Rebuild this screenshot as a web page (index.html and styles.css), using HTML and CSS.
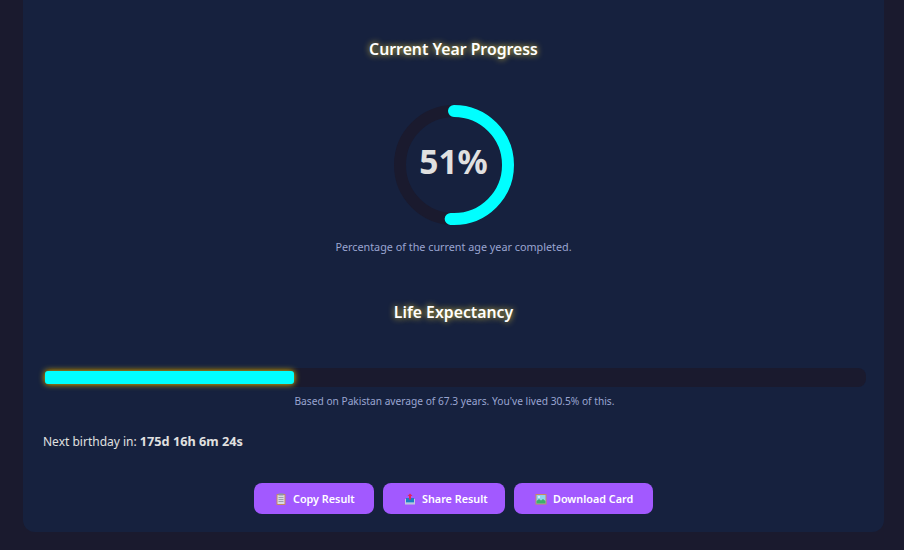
FILE: index.html
```html
<!DOCTYPE html>
<html lang="en">
<head>
<meta charset="utf-8">
<title>Age Result</title>
<link rel="stylesheet" href="styles.css">
</head>
<body>
<main class="card">
  <section class="ring-section">
    <h2 class="title">Current Year Progress</h2>
    <div class="ring">
      <svg class="ring-svg" width="120" height="120" viewBox="0 0 120 120">
        <circle class="ring-track" cx="60" cy="60" r="54"/>
        <circle class="ring-value" cx="60" cy="60" r="54" pathLength="100" stroke-dasharray="51 100" transform="rotate(-90 60 60)"/>
      </svg>
      <span class="ring-label">51%</span>
    </div>
    <p class="note">Percentage of the current age year completed.</p>
  </section>
  <section class="life-section">
    <h2 class="title title-life">Life Expectancy</h2>
    <div class="bar"><div class="bar-fill" style="width:30.4%"></div></div>
    <p class="note note-bar">Based on Pakistan average of 67.3 years. You've lived 30.5% of this.</p>
  </section>
  <p class="birthday">Next birthday in: <strong>175d 16h 6m 24s</strong></p>
  <div class="actions">
    <button class="btn" type="button">
      <svg class="ico" viewBox="0 0 12 12"><rect x="1.500" y="1" width="9" height="11" rx=".8" fill="#c98a5e"/><rect x="2.500" y="2" width="7" height="9" fill="#d9d9e3"/><rect x="3.500" y=".3" width="5" height="2.200" fill="#8f93a3"/><path d="M3.500 4.500h5M3.500 6.500h5M3.500 8.500h5" stroke="#8d8fa0" stroke-width=".8"/></svg>
      Copy Result
    </button>
    <button class="btn" type="button">
      <svg class="ico" viewBox="0 0 12 12"><path d="M1 6h10v5.500H1z" fill="#c4cbdc"/><path d="M2 5h8v4H2z" fill="#1c7fc4"/><path d="M2 9h8v1.200H2z" fill="#7fb0dc"/><path d="M6 .5 8.500 3H7v3.500H5V3H3.500z" fill="#e0245e"/></svg>
      Share Result
    </button>
    <button class="btn" type="button">
      <svg class="ico" viewBox="0 0 12 12"><rect x=".5" y="1" width="11" height="10.500" fill="#c98a5e"/><rect x="1.500" y="2" width="9" height="8.500" fill="#8fd3ef"/><path d="M1.500 10.500V8l2.500-2 2 1.500L8 6l2.500 2v2.500z" fill="#3fae6a"/><circle cx="4" cy="4" r="1" fill="#e8f6fb"/></svg>
      Download Card
    </button>
  </div>
</main>
</body>
</html>
```
FILE: styles.css
```css
* { box-sizing: border-box; }
html, body { margin: 0; height: 100%; }
body {
  background: #1a1a2e;
  color: #e0e0e0;
  font-family: "Noto Sans", "Open Sans", sans-serif;
  overflow: hidden;
  padding: 0 20px 18px 23px;
  height: 550px;
}
.card {
  background: #16213e;
  border-radius: 0 0 12px 12px;
  height: 532px;
  padding: 0 18px 0 20px;
  display: flex;
  flex-direction: column;
}
.title {
  margin: 0;
  color: #fff;
  font-size: 15.800px;
  font-weight: 600;
  line-height: 22px;
  text-align: center;
  text-shadow: 0 0 6px rgba(255, 225, 60, .9);
}
.title-life { padding-right: 2px; }
.ring-section { padding: 38px 2px 0 0; display: flex; flex-direction: column; align-items: center; }
.ring { position: relative; width: 120px; height: 120px; margin-top: 45px; }
.ring-svg { display: block; }
.ring-track { fill: none; stroke: #1a1a2e; stroke-width: 12; }
.ring-value { fill: none; stroke: #00ffff; stroke-width: 12; stroke-linecap: round; }
.ring-label {
  position: absolute;
  inset: 0;
  padding-bottom: 8px;
  display: flex;
  align-items: center;
  justify-content: center;
  font-size: 33.500px;
  font-weight: 700;
  color: #e0e0e0;
}
.note {
  margin: 14px 0 0;
  font-size: 10.800px;
  line-height: 16px;
  color: #9aa5d1;
  text-align: center;
}
.life-section { margin-top: 46px; }
.bar {
  height: 19px;
  margin: 45px 0 0;
  padding: 3px 2px;
  background: #1a1a2e;
  border-radius: 8px;
}
.bar-fill {
  height: 13px;
  background: #00ffff;
  border-radius: 3px;
  box-shadow: 0 0 6px #ffd000;
}
.note-bar { margin-top: 6px; font-size: 10.200px; }
.birthday { margin: 23px 0 0; font-size: 12px; line-height: 18px; }
.birthday strong { font-size: 12.700px; font-weight: 700; }
.actions {
  margin-top: 32px;
  padding-right: 2px;
  display: grid;
  grid-template-columns: 120px 122px 139px;
  justify-content: center;
  gap: 9px;
}
.btn {
  display: flex;
  align-items: center;
  gap: 6px;
  height: 31px;
  padding: 0 0 0 21px;
  border: 0;
  border-radius: 8px;
  background: #a259ff;
  color: #fff;
  font: 600 10.800px "Noto Sans", "Open Sans", sans-serif;
}
.ico { width: 12px; height: 12px; flex: none; }
```
